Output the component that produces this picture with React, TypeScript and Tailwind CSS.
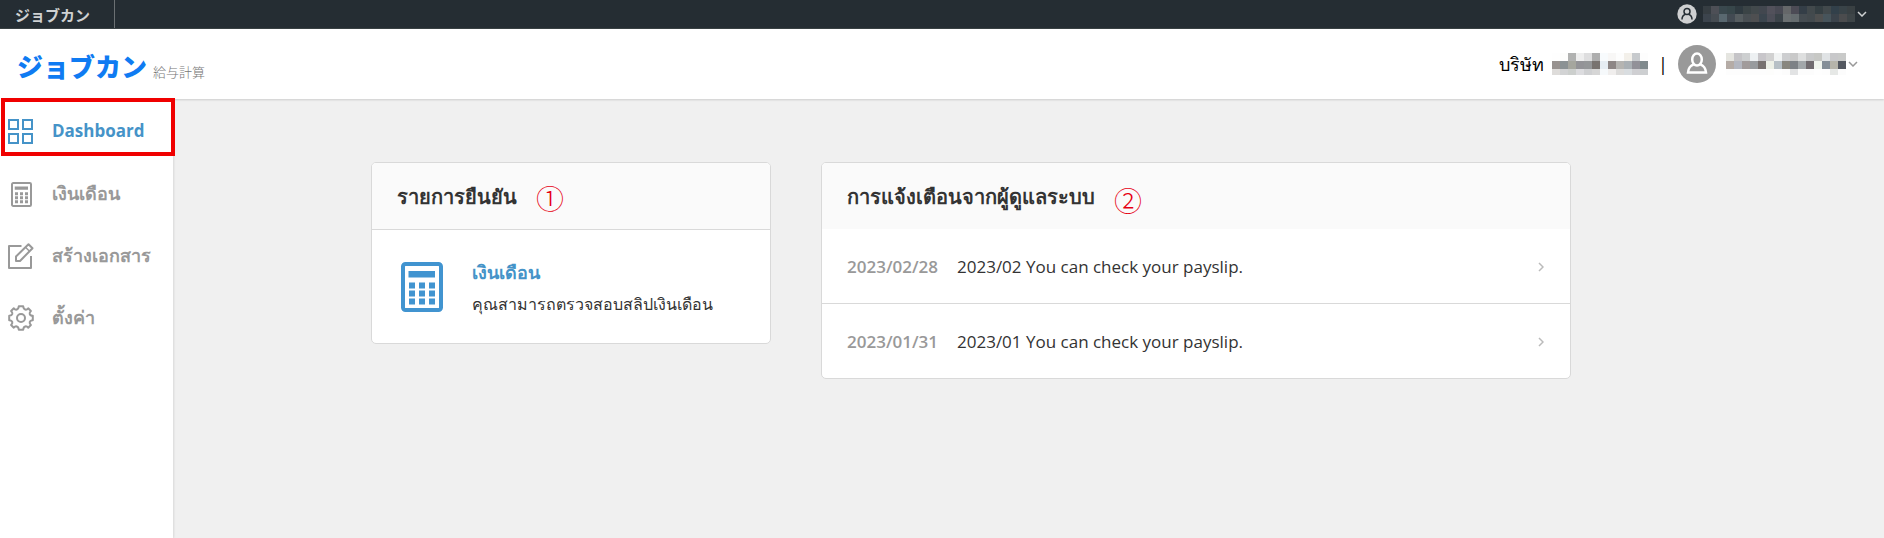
import React from 'react';

interface MosaicProps {
  rows: string[][];
  label: string;
}

const topUserRows = [
  ['#363d42', '#4d4f56', '#3a484e', '#37464a', '#2f3a40', '#3b4446', '#42494c', '#42474f', '#52515b', '#494a54', '#656769', '#4c4b55', '#343e47', '#42494c', '#353f43', '#42494c', '#32404a', '#394348', '#394043'],
  ['#3c444d', '#464c52', '#596870', '#424a52', '#565d60', '#494f53', '#4e4f51', '#3b454e', '#4d4e58', '#3b4349', '#6b7072', '#656c6f', '#454c51', '#434a4e', '#4f5050', '#47545b', '#3b434b', '#4b4c4e', '#3e4548'],
];

const companyRows = [
  ['#fefefe', '#fdfdfc', '#b1b2b1', '#eeeeee', '#dededf', '#aeaeae', '#f8fbfd', '#f8f7f6', '#fdfdfd', '#f3f0ea', '#c7cacd', '#fdfdfd'],
  ['#989390', '#8b9294', '#a5a69e', '#939397', '#949698', '#787370', '#e6edf3', '#8d8685', '#b5b4b1', '#aab0b4', '#929198', '#7f898c'],
  ['#dedcda', '#d2d3d4', '#cccfcd', '#dcdcdf', '#cfd0d2', '#d6d6d6', '#f6f9fb', '#f0eeed', '#dddcdb', '#d9dde0', '#cfcfd2', '#cdcfd1'],
];

const userRows = [
  ['#e5e5e0', '#c5c4c7', '#cdcfd0', '#edf0f2', '#c8c6ca', '#d1d1d1', '#f1f3f3', '#cdced0', '#c9c9c9', '#dedfdf', '#c9cacb', '#c7c8c5', '#e0e3e5', '#c8c8ca', '#c9cac9'],
  ['#b5aca6', '#b4b7c0', '#a19b9b', '#989b9e', '#787270', '#edf0e7', '#b7c0c6', '#89877f', '#7d8186', '#a2a7aa', '#716c70', '#f1f5ee', '#858f98', '#b6b4aa', '#545860'],
  ['#fdfdfd', '#fdfdfd', '#fdfdfd', '#fdfdfd', '#fdfdfd', '#fdfdfc', '#fefefe', '#fcfcfc', '#e2e3e4', '#fcfcfc', '#fcfcfc', '#fefefe', '#fdfdfd', '#e6e8e6', '#fcfcfc'],
];

// third row is cut a little short
const Mosaic: React.FC<MosaicProps> = ({ rows, label }) => (
  <span role="img" aria-label={label} className="flex flex-col">
    {rows.map((row, y) => (
      <span key={y} className={`flex overflow-hidden ${y === 2 ? 'h-[6px]' : 'h-2'}`}>
        {row.map((color, x) => (
          <span key={x} className="w-2 h-2" style={{ backgroundColor: color }} />
        ))}
      </span>
    ))}
  </span>
);

const CalculatorIcon = ({ className }: { className: string }) => (
  <svg className={className} viewBox="0 0 42 50" fill="currentColor">
    <rect x="2" y="2" width="38" height="46" rx="2.5" fill="none" stroke="currentColor" strokeWidth="4" />
    <rect x="7.5" y="9" width="26.5" height="6.5" />
    {[20.5, 28.5, 36.5].map((y) =>
      [8, 18, 28].map((x) => <rect key={`${x}-${y}`} x={x} y={y} width="6" height="6" />)
    )}
  </svg>
);

const DashboardIcon = () => (
  <svg className="w-[26px] h-[26px]" viewBox="0 0 26 26" fill="none" stroke="currentColor" strokeWidth="2">
    <rect x="1" y="1" width="9" height="9" />
    <rect x="15" y="1" width="9" height="9" />
    <rect x="1" y="15" width="9" height="9" />
    <rect x="15" y="15" width="9" height="9" />
  </svg>
);

const EditIcon = () => (
  <svg className="w-[26px] h-[26px]" viewBox="0 0 26 26" fill="none" stroke="currentColor" strokeWidth="2" strokeLinejoin="round">
    <path d="M13.500 3H1v22h22V13" />
    <path d="M8 18v-4.500L20.500 1.200l4 4L12 18z" />
    <path d="M17.500 4.200l4 4" strokeWidth="1.500" />
  </svg>
);

const GearIcon = () => (
  <svg className="w-[26px] h-[26px]" viewBox="0 0 26 26" fill="none" stroke="currentColor" strokeWidth="2" strokeLinejoin="round">
    <path d="M10.800 1.200h4.400q.2 3.200 2.700 3.500 1.200 0 2.300-1.400l2.700 2.700q-1.500 1.500-1.200 2.800.7 2 3.100 2v4.400q-2.400 0-3.100 2-.3 1.300 1.200 2.800l-2.700 2.700q-1.100-1.400-2.300-1.400-2.500.3-2.700 3.500h-4.400q-.2-3.200-2.700-3.500-1.200 0-2.300 1.400l-2.700-2.700q1.500-1.500 1.200-2.800-.7-2-3.100-2v-4.400q2.400 0 3.100-2 .3-1.300-1.200-2.800l2.700-2.700q1.100 1.400 2.300 1.400 2.500-.3 2.700-3.500z" />
    <circle cx="13" cy="13" r="4" />
  </svg>
);

const Chevron = ({ className, d = 'M1 1l4 4 4-4', box = '0 0 10 6' }: { className: string; d?: string; box?: string }) => (
  <svg className={className} viewBox={box} fill="none" stroke="currentColor" strokeWidth="1.500">
    <path d={d} />
  </svg>
);

const menu = [
  { label: 'Dashboard', icon: <DashboardIcon />, active: true },
  { label: 'เงินเดือน', icon: <CalculatorIcon className="w-[21px] h-[25px]" />, active: false },
  { label: 'สร้างเอกสาร', icon: <EditIcon />, active: false },
  { label: 'ตั้งค่า', icon: <GearIcon />, active: false },
];

const notices = [
  { date: '2023/02/28', text: '2023/02 You can check your payslip.' },
  { date: '2023/01/31', text: '2023/01 You can check your payslip.' },
];

export default function App() {
  return (
    <div className="min-h-screen flex flex-col bg-[#f0f0f0] font-['Open_Sans','Noto_Sans','Noto_Sans_CJK_JP',sans-serif] text-[#333]">
      <div className="h-[29px] flex items-stretch justify-between bg-[#252d33] border-b border-[#3a4244] text-[#cfd1d2]">
        <a href="#" className="w-[115px] pl-[15px] pt-[2px] flex items-center border-r border-[#6b7073] font-['Noto_Sans_CJK_JP',sans-serif] text-[15px] font-bold">
          ジョブカン
        </a>
        <button type="button" aria-label="Account" className="flex items-center pr-[17px]">
          <svg className="w-5 h-5 mr-[6px]" viewBox="0 0 20 20">
            <circle cx="10" cy="10" r="9.700" fill="#cfd0d1" />
            <g fill="none" stroke="#252d33" strokeWidth="1.500">
              <circle cx="10" cy="7.500" r="3" />
              <path d="M5 15.500c0-3 1.500-4.500 3.200-5M15 15.500c0-3-1.500-4.500-3.200-5" />
            </g>
          </svg>
          <Mosaic rows={topUserRows} label="User name" />
          <Chevron className="w-[10px] h-[6px] ml-[2px]" />
        </button>
      </div>

      <header className="relative h-[70px] pl-[17px] pr-[26px] flex items-center justify-between bg-white shadow-[0_1px_2px_rgba(0,0,0,0.15)]">
        <a href="#" className="pt-1 flex items-baseline gap-[6px] font-['Noto_Sans_CJK_JP',sans-serif]">
          <span className="text-[26px] leading-[38px] font-black text-[#0f7bf2]">ジョブカン</span>
          <span className="text-[13px] font-light text-[#777]">給与計算</span>
        </a>
        <div className="flex items-center text-black">
          <span className="mr-2 text-[18px]">บริษัท</span>
          <Mosaic rows={companyRows} label="Company name" />
          <span className="mx-[10px] text-[18px]">|</span>
          <button type="button" aria-label="User menu" className="flex items-center text-[#999]">
            <svg className="w-[38px] h-[38px] mr-[10px]" viewBox="0 0 38 38">
              <circle cx="19" cy="19" r="19" fill="#999" />
              <g fill="none" stroke="#fff" strokeWidth="2.500">
                <ellipse cx="19" cy="14.500" rx="4.800" ry="6" />
                <path d="M15.500 19.500c-3.500 1.500-5 3-5.500 8h18c-.5-5-2-6.500-5.500-8" />
              </g>
            </svg>
            <Mosaic rows={userRows} label="User name" />
            <Chevron className="w-[10px] h-[6px] ml-[2px]" />
          </button>
        </div>
      </header>

      <div className="flex-1 flex">
        <nav className="relative w-[173px] shrink-0 pt-px bg-white shadow-[1px_0_2px_rgba(0,0,0,0.1)]">
          {menu.map((item) => (
            <a
              key={item.label}
              href="#"
              className={`h-[62px] pl-2 flex items-center gap-[18px] ${
                item.active ? 'text-[17px] font-bold text-[#4593c8]' : 'text-[18px] font-semibold text-[#999]'
              }`}
            >
              <span className="w-[26px] pt-[2px] flex justify-center">{item.icon}</span>
              {item.label}
            </a>
          ))}
          <div className="absolute left-px -top-px w-[174px] h-[58px] border-4 border-[#f00000] pointer-events-none" />
        </nav>

        <main className="flex-1 pt-[63px] pr-[115px]">
          <div className="max-w-[1200px] mx-auto flex items-start gap-[50px]">
            <section className="w-[400px] bg-white border border-[#d9d9d9] rounded-[5px] overflow-hidden">
              <div className="h-[67px] px-[25px] flex items-center gap-[19px] bg-[#fafafa] border-b border-[#d9d9d9]">
                <h2 className="pt-[2px] text-[20px] font-semibold">รายการยืนยัน</h2>
                <span className="pt-1 font-['Noto_Sans_CJK_JP',sans-serif] text-[28px] leading-8 font-light text-[#e60012]">①</span>
              </div>
              <a href="#" className="h-[113px] pl-[29px] flex items-center gap-[29px]">
                <CalculatorIcon className="w-[42px] h-[50px] text-[#4194d0]" />
                <div className="pt-[2px]">
                  <p className="text-[18px] leading-8 font-semibold text-[#4593c8]">เงินเดือน</p>
                  <p className="text-[16px] leading-8">คุณสามารถตรวจสอบสลิปเงินเดือน</p>
                </div>
              </a>
            </section>

            <section className="flex-1 bg-white border border-[#d9d9d9] rounded-[5px] overflow-hidden">
              <div className="h-[66px] px-[25px] flex items-center gap-[19px] bg-[#fafafa]">
                <h2 className="pt-[2px] text-[20px] font-semibold">การแจ้งเตือนจากผู้ดูแลระบบ</h2>
                <span className="pt-2 font-['Noto_Sans_CJK_JP',sans-serif] text-[28px] leading-8 font-light text-[#e60012]">②</span>
              </div>
              <ul className="divide-y divide-[#d9d9d9]">
                {notices.map((notice) => (
                  <li key={notice.date}>
                    <a href="#" className="h-[74px] pl-[25px] pr-[26px] pt-[2px] flex items-center text-[17px]">
                      <span className="w-[110px] font-semibold text-[#999]">{notice.date}</span>
                      <span className="flex-1">{notice.text}</span>
                      <Chevron className="w-[6px] h-[10px] text-[#bbb]" d="M1 1l4 4-4 4" box="0 0 6 10" />
                    </a>
                  </li>
                ))}
              </ul>
            </section>
          </div>
        </main>
      </div>
    </div>
  );
}
